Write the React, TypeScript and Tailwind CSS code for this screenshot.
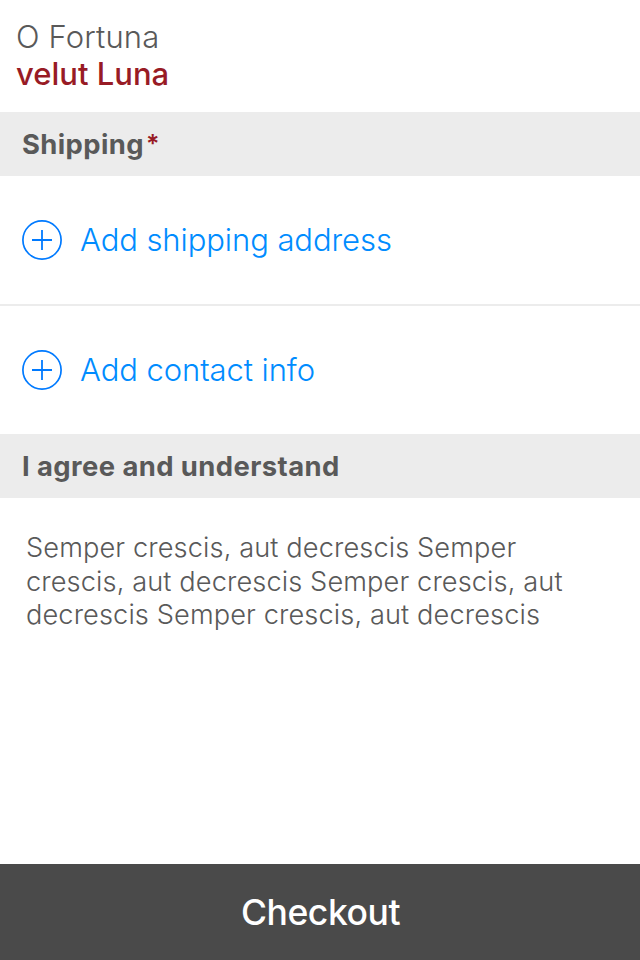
import React from "react";

function Plus() {
  return (
    <svg className="h-10 w-10 shrink-0" viewBox="0 0 40 40" fill="none" stroke="#007aff">
      <circle cx="20" cy="20" r="19.1" strokeWidth="1.7" />
      <path d="M20 10v20M10 20h20" strokeWidth="1.8" />
    </svg>
  );
}

function Row({ label }: { label: string }) {
  return (
    <button className="flex h-32 w-full items-center pl-[22px] text-left text-[#008cff]">
      <Plus />
      <span className="ml-[18px] text-[31px] leading-10 font-light tracking-[-0.08px]">{label}</span>
    </button>
  );
}

export default function App() {
  return (
    <main className="flex h-[960px] w-[640px] flex-col bg-white font-['Inter',sans-serif] text-[#595959]">
      <header className="h-28 pt-[18px] pl-4 text-[31px] leading-[37px]">
        <div className="font-light tracking-[0.15px]">O Fortuna</div>
        <div className="font-medium tracking-[0px] text-[#981b25]">velut Luna</div>
      </header>
      <h2 className="flex h-16 items-center bg-[#ececec] pt-px pl-[22px] text-[27.4px] font-bold tracking-[0.4px]">
        Shipping<span className="ml-0.5 text-[25px] font-semibold tracking-normal text-[#981b25]">*</span>
      </h2>
      <Row label="Add shipping address" />
      <div className="h-0.5 bg-[#ececec]" />
      <Row label="Add contact info" />
      <h2 className="flex h-16 items-center bg-[#ececec] pt-px pl-[22px] text-[27.4px] font-bold tracking-[0.43px]">I agree and understand</h2>
      <p className="pt-[33px] pl-[26px] text-[27.2px] leading-[33.5px] font-light tracking-[0.11px] whitespace-nowrap">
        Semper crescis, aut decrescis Semper<br />crescis, aut decrescis Semper crescis, aut<br />decrescis Semper crescis, aut decrescis
      </p>
      <button className="mt-auto h-24 w-full bg-[#4a4a4a] pt-px pl-px text-[35.5px] font-[450] tracking-[-0.45px] text-white">Checkout</button>
    </main>
  );
}
